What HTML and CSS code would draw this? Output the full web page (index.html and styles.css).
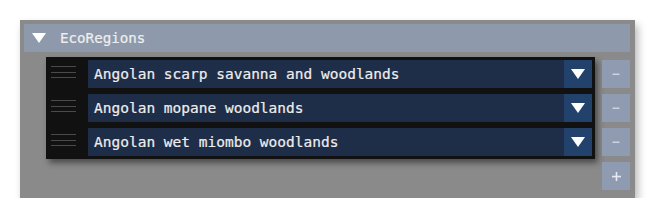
FILE: index.html
```html
<!DOCTYPE html>
<html>
<head>
<meta charset="utf-8">
<link rel="stylesheet" href="styles.css">
</head>
<body>
<div class="panel">
  <div class="header">
    <svg class="tri" width="14" height="10" viewBox="0 0 14 10"><polygon points="0,0 14,0 7,10" fill="#ffffff"/></svg>
    <span class="title">EcoRegions</span>
  </div>
  <div class="content">
    <div class="list">
      <div class="row">
        <div class="handle"><i></i><i></i><i></i></div>
        <div class="select"><span class="label">Angolan scarp savanna and woodlands</span><span class="arrow"><svg width="14" height="10" viewBox="0 0 14 10"><polygon points="0,0 14,0 7,10" fill="#ffffff"/></svg></span></div>
      </div>
      <div class="row">
        <div class="handle"><i></i><i></i><i></i></div>
        <div class="select"><span class="label">Angolan mopane woodlands</span><span class="arrow"><svg width="14" height="10" viewBox="0 0 14 10"><polygon points="0,0 14,0 7,10" fill="#ffffff"/></svg></span></div>
      </div>
      <div class="row">
        <div class="handle"><i></i><i></i><i></i></div>
        <div class="select"><span class="label">Angolan wet miombo woodlands</span><span class="arrow"><svg width="14" height="10" viewBox="0 0 14 10"><polygon points="0,0 14,0 7,10" fill="#ffffff"/></svg></span></div>
      </div>
    </div>
    <div class="buttons">
      <div class="btn"><svg width="8" height="8" viewBox="0 0 8 8"><rect x="0.5" y="3.5" width="7" height="1.5" fill="#cdd4df"/></svg></div>
      <div class="btn"><svg width="8" height="8" viewBox="0 0 8 8"><rect x="0.5" y="3.5" width="7" height="1.5" fill="#cdd4df"/></svg></div>
      <div class="btn"><svg width="8" height="8" viewBox="0 0 8 8"><rect x="0.5" y="3.5" width="7" height="1.5" fill="#cdd4df"/></svg></div>
      <div class="btn"><svg width="9" height="9" viewBox="0 0 9 9"><rect x="0" y="3.75" width="9" height="1.6" fill="#e6eaf0"/><rect x="3.7" y="0" width="1.6" height="9" fill="#e6eaf0"/></svg></div>
    </div>
  </div>
</div>
</body>
</html>
```
FILE: styles.css
```css
html, body {
  margin: 0;
  padding: 0;
  background: #ffffff;
}
body {
  padding: 20px 0 0 20px;
  font-family: "DejaVu Sans Mono", "Liberation Mono", monospace;
}
.panel {
  width: 606px;
  height: 166px;
  padding: 4px 5px 8px 4px;
  background: #8a8a8a;
  box-shadow: 3px 5px 8px rgba(0, 0, 0, 0.28);
}
.header {
  height: 28px;
  background: #8e9aab;
  display: flex;
  align-items: center;
  padding-left: 8px;
}
.tri {
  display: block;
  margin-right: 14px;
}
.title {
  color: #eeeeee;
  font-size: 14.2px;
  -webkit-text-stroke: 0.2px #eeeeee;
}
.content {
  display: flex;
  margin-top: 5px;
}
.list {
  margin-left: 22px;
  width: 549px;
  height: 102px;
  box-sizing: border-box;
  padding: 3px 3px 3px 0;
  background: #111111;
  display: flex;
  flex-direction: column;
  gap: 6px;
  box-shadow: 3px 4px 6px rgba(0, 0, 0, 0.45);
}
.row {
  display: flex;
  height: 28px;
}
.handle {
  width: 42px;
  display: flex;
  flex-direction: column;
  padding: 6px 0 0 5px;
  box-sizing: border-box;
  gap: 4.5px;
}
.handle i {
  display: block;
  width: 25px;
  height: 1px;
  background: #4a4a4a;
}
.select {
  flex: 1;
  display: flex;
  background: #1e2d48;
}
.label {
  flex: 1;
  color: #eeeeee;
  font-size: 14.5px;
  line-height: 29px;
  padding-left: 6px;
  -webkit-text-stroke: 0.2px #eeeeee;
}
.arrow {
  width: 28px;
  background: #23426b;
  display: flex;
  align-items: center;
  justify-content: center;
}
.arrow svg {
  display: block;
}
.buttons {
  margin-left: 7px;
  padding-top: 3px;
  display: flex;
  flex-direction: column;
  gap: 6px;
}
.btn {
  width: 28px;
  height: 28px;
  background: #8e9bb1;
  display: flex;
  align-items: center;
  justify-content: center;
}
.btn svg {
  display: block;
}
```
